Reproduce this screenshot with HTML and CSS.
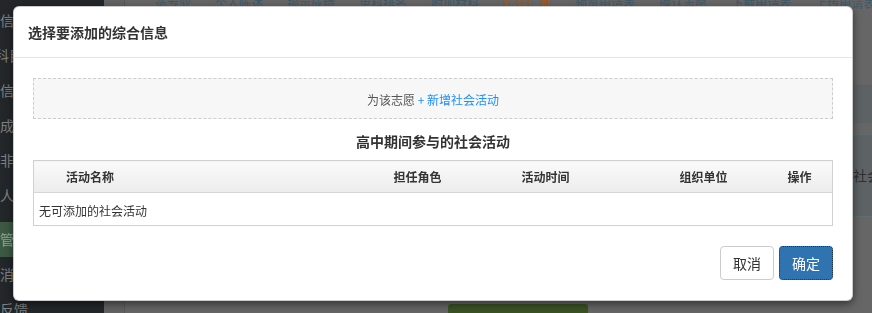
FILE: index.html
```html
<!DOCTYPE html>
<html lang="zh-CN">
<head>
    <meta charset="UTF-8">
    <meta name="viewport" content="width=device-width, initial-scale=1.0">
    <title>综合信息 - 志愿填报</title>
    <link rel="stylesheet" href="styles.css">
</head>
<body>
    <div class="page">
        <aside class="sidebar">
            <ul class="side-menu">
                <li class="side-item">信息填报</li>
                <li class="side-item shift">科目选择</li>
                <li class="side-item">信息确认</li>
                <li class="side-item">成绩查询</li>
                <li class="side-item">非统招</li>
                <li class="side-item">人工审核</li>
                <li class="side-item active">管理中心</li>
                <li class="side-item">消息</li>
                <li class="side-item">反馈</li>
            </ul>
        </aside>
        <div class="gutter"></div>
        <main class="main">
            <nav class="tabs">
                <span class="tab">选专业</span>
                <span class="tab">个人陈述</span>
                <span class="tab">揭示成绩</span>
                <span class="tab">单科排名</span>
                <span class="tab">附加材料</span>
                <span class="tab current">综合信息</span>
                <span class="tab">预览申请表</span>
                <span class="tab">确认志愿</span>
                <span class="tab">下载申请表</span>
                <span class="tab">上传申请表</span>
            </nav>
            <div class="bg-table">
                <div class="bg-head"></div>
                <div class="bg-row">
                    <div class="bg-cell"></div>
                    <div class="bg-cell">社会活动</div>
                </div>
            </div>
            <div class="bg-actions">
                <span class="bg-btn"></span>
            </div>
        </main>
    </div>

    <div class="backdrop">
        <div class="modal">
            <div class="modal-header">
                <h4 class="modal-title">选择要添加的综合信息</h4>
            </div>
            <div class="modal-body">
                <div class="add-box">
                    为该志愿 <a class="add-link" href="#">+ 新增社会活动</a>
                </div>
                <h5 class="section-title">高中期间参与的社会活动</h5>
                <table class="info-table">
                    <colgroup>
                        <col class="col-name">
                        <col class="col-role">
                        <col class="col-time">
                        <col class="col-org">
                        <col class="col-op">
                    </colgroup>
                    <thead>
                        <tr>
                            <th class="th-first">活动名称</th>
                            <th>担任角色</th>
                            <th>活动时间</th>
                            <th>组织单位</th>
                            <th>操作</th>
                        </tr>
                    </thead>
                    <tbody>
                        <tr>
                            <td class="empty" colspan="5">无可添加的社会活动</td>
                        </tr>
                    </tbody>
                </table>
            </div>
            <div class="modal-footer">
                <button class="btn btn-default">取消</button>
                <button class="btn btn-primary">确定</button>
            </div>
        </div>
    </div>
</body>
</html>
```

FILE: styles.css
```css
html, body {
    margin: 0;
    padding: 0;
    height: 100%;
    overflow: hidden;
}
body {
    font-family: "Noto Sans CJK SC", "Liberation Sans", sans-serif;
    font-size: 12px;
    color: #333;
    background-color: #666;
}
.page {
    display: flex;
    height: 100%;
}

/* dimmed page behind the dialog */
.sidebar {
    width: 104px;
    flex-shrink: 0;
    background-color: #23272a;
}
.side-menu {
    list-style: none;
    margin: 0;
    padding: 3px 0 0;
}
.side-item {
    height: 35px;
    line-height: 35px;
    font-size: 14px;
    color: #7e8285;
    white-space: nowrap;
    overflow: hidden;
}
.side-item.shift {
    text-indent: -5px;
}
.side-item.active {
    margin-top: 9px;
    background-color: #3c5944;
    color: #8ea493;
}
.gutter {
    width: 20px;
    flex-shrink: 0;
    background-color: #636363;
    border-right: 1px solid #575757;
}
.main {
    flex: 1;
    min-width: 0;
    background-color: #666;
}
.tabs {
    display: flex;
    gap: 24px;
    margin-top: -6px;
    padding-left: 30px;
    height: 18px;
    line-height: 18px;
    font-size: 12px;
    white-space: nowrap;
}
.tab {
    color: #3f5a68;
}
.tab.current {
    color: #9c5a22;
}
.bg-table {
    margin-top: 73px;
}
.bg-head {
    height: 37px;
    background-color: #5d6265;
    border-top: 1px solid #596064;
}
.bg-row {
    display: grid;
    grid-template-columns: 728px 1fr;
    margin-top: 11px;
    height: 81px;
    background-color: #5d6265;
    border-top: 1px solid #5f6c73;
    border-bottom: 1px solid #5f6c73;
}
.bg-cell {
    line-height: 81px;
    font-size: 14px;
    color: #2e3032;
    white-space: nowrap;
    overflow: hidden;
}
.bg-actions {
    margin-top: 87px;
    padding-left: 323px;
}
.bg-btn {
    display: block;
    width: 140px;
    height: 30px;
    background-color: #3a5224;
    border-radius: 3px;
}

/* dialog */
.backdrop {
    position: fixed;
    top: 0;
    left: 0;
    right: 0;
    bottom: 0;
}
.modal {
    box-sizing: border-box;
    width: 840px;
    margin: 6px 0 0 13px;
    background-color: #fff;
    border: 1px solid rgba(0,0,0,0.2);
    border-radius: 6px;
    box-shadow: 0 3px 9px rgba(0,0,0,0.5);
}
.modal-header {
    padding: 15px 14px;
    border-bottom: 1px solid #e5e5e5;
}
.modal-title {
    margin: 0;
    font-size: 14px;
    line-height: 20px;
    font-weight: bold;
    color: #333;
}
.modal-body {
    padding: 20px 19px 0;
}
.add-box {
    padding: 11px 0 8px;
    line-height: 20px;
    text-align: center;
    color: #555;
    background-color: #f7f7f7;
    border: 1px dashed #ccc;
}
.add-link {
    color: #1e8fff;
    text-decoration: none;
}
.section-title {
    margin: 12px 0 9px;
    font-size: 14px;
    line-height: 20px;
    font-weight: bold;
    text-align: center;
    color: #333;
}
.info-table {
    width: 100%;
    table-layout: fixed;
    border-collapse: collapse;
    border: 1px solid #d0d0d0;
}
.col-name { width: 352px; }
.col-role { width: 128px; }
.col-time { width: 158px; }
.col-org { width: 108px; }
.info-table th {
    height: 31px;
    padding: 0 0 0 8px;
    line-height: 31px;
    text-align: left;
    font-weight: bold;
    font-size: 12px;
    color: #333;
    background: linear-gradient(#fafafa, #ececec);
    border-bottom: 1px solid #d6d6d6;
}
.info-table th.th-first {
    padding-left: 32px;
}
.info-table td.empty {
    padding: 8px 5px 4px;
    line-height: 20px;
    color: #333;
}
.modal-footer {
    display: flex;
    justify-content: flex-end;
    gap: 5px;
    padding: 20px 19px 20px;
}
.btn {
    box-sizing: border-box;
    height: 34px;
    padding: 6px 12px;
    font-family: "Noto Sans CJK SC", "Liberation Sans", sans-serif;
    font-size: 14px;
    line-height: 20px;
    border-radius: 4px;
    cursor: pointer;
}
.btn-default {
    color: #333;
    background-color: #fff;
    border: 1px solid #ccc;
}
.btn-primary {
    color: #fff;
    background-color: #2f74b1;
    border: 1px dotted #1b3550;
}
```
